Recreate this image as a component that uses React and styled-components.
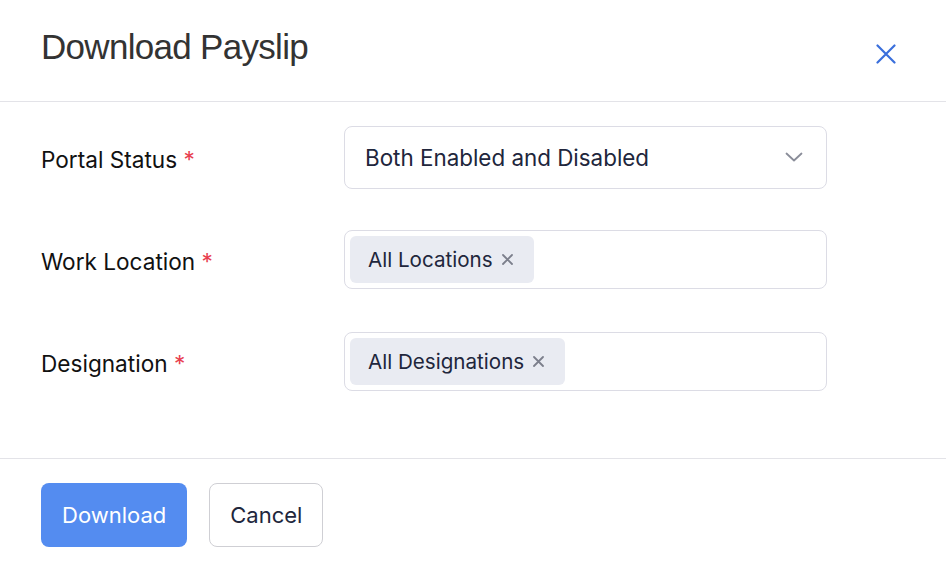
import styled, { createGlobalStyle } from 'styled-components';

const GlobalStyle = createGlobalStyle`
  html, body {
    margin: 0;
    padding: 0;
    background: #ffffff;
  }
  body {
    font-family: Inter, "Noto Sans", sans-serif;
    color: #21263c;
  }
  * {
    box-sizing: border-box;
  }
`;

const fields = [
  { label: 'Portal Status', type: 'select', value: 'Both Enabled and Disabled' },
  { label: 'Work Location', type: 'tags', value: 'All Locations' },
  { label: 'Designation', type: 'tags', value: 'All Designations' },
];

const App = () => {
  return (
    <>
      <GlobalStyle />
      <Modal>
        <Header>
          <Title>Download Payslip</Title>
          <CloseButton aria-label="Close">
            <svg width="20" height="20" viewBox="0 0 20 20" fill="none">
              <path d="M1.5 1.5L18.5 18.5M18.5 1.5L1.5 18.5" stroke="#3a6fdc" strokeWidth="2.2" strokeLinecap="round" />
            </svg>
          </CloseButton>
        </Header>

        <Body>
          {fields.map((field) => (
            <FieldRow key={field.label}>
              <Label>
                {field.label} <Required>*</Required>
              </Label>
              {field.type === 'select' ? (
                <SelectBox>
                  <SelectValue>{field.value}</SelectValue>
                  <svg width="18" height="10" viewBox="0 0 18 10" fill="none">
                    <path d="M1.5 1.5L9 8.5L16.5 1.5" stroke="#8a8d99" strokeWidth="1.8" strokeLinecap="round" strokeLinejoin="round" />
                  </svg>
                </SelectBox>
              ) : (
                <TagBox>
                  <Tag>
                    {field.value}
                    <TagRemove>
                      <svg width="11" height="11" viewBox="0 0 11 11" fill="none">
                        <path d="M1 1L10 10M10 1L1 10" stroke="#7c7f8c" strokeWidth="1.8" strokeLinecap="round" />
                      </svg>
                    </TagRemove>
                  </Tag>
                </TagBox>
              )}
            </FieldRow>
          ))}
        </Body>

        <Footer>
          <PrimaryButton>Download</PrimaryButton>
          <SecondaryButton>Cancel</SecondaryButton>
        </Footer>
      </Modal>
    </>
  );
};

export default App;

const Modal = styled.div`
  width: 946px;
  height: 566px;
  background: #fff;
  display: flex;
  flex-direction: column;
`;

const Header = styled.div`
  height: 102px;
  flex-shrink: 0;
  border-bottom: 1px solid #e3e3e8;
  display: flex;
  align-items: flex-start;
  justify-content: space-between;
  padding: 26px 50px 0 41px;
`;

const Title = styled.h2`
  margin: 0;
  font-family: "Liberation Sans", Arial, sans-serif;
  font-weight: 400;
  font-size: 35px;
  line-height: 42px;
  color: #333333;
  letter-spacing: -0.7px;
`;

const CloseButton = styled.button`
  border: none;
  background: none;
  padding: 0;
  margin-top: 18px;
  width: 20px;
  height: 20px;
  display: flex;
  cursor: pointer;
`;

const Body = styled.div`
  height: 357px;
  flex-shrink: 0;
  border-bottom: 1px solid #e3e3e8;
  padding: 25px 0 0 41px;
  display: flex;
  flex-direction: column;
  gap: 42px;
`;

const FieldRow = styled.div`
  display: flex;
  align-items: center;
  height: 60px;
`;

const Label = styled.div`
  width: 303px;
  padding-top: 5px;
  font-size: 22.6px;
  color: #111111;
`;

const Required = styled.span`
  color: #e8404f;
`;

const SelectBox = styled.div`
  width: 483px;
  height: 63px;
  border: 1px solid #dcdce5;
  border-radius: 8px;
  display: flex;
  align-items: center;
  justify-content: space-between;
  padding: 0 23px 0 20px;
`;

const SelectValue = styled.span`
  font-size: 22.4px;
  color: #21263c;
`;

const TagBox = styled.div`
  width: 483px;
  height: 59px;
  border: 1px solid #dcdce5;
  border-radius: 8px;
  display: flex;
  align-items: center;
  padding: 0 5px;
`;

const Tag = styled.div`
  height: 47px;
  background: #e9ebf2;
  border-radius: 6px;
  display: flex;
  align-items: center;
  gap: 9px;
  padding: 0 21px 0 18px;
  font-size: 20.6px;
  color: #21263c;
`;

const TagRemove = styled.span`
  display: flex;
  margin-top: 1px;
`;

const Footer = styled.div`
  flex: 1;
  display: flex;
  align-items: center;
  gap: 22px;
  padding: 5px 41px 0;
`;

const PrimaryButton = styled.button`
  height: 64px;
  padding: 0 21px;
  border: none;
  border-radius: 8px;
  background: #548cf0;
  color: #ffffff;
  font-family: Inter, sans-serif;
  font-size: 22px;
  cursor: pointer;
`;

const SecondaryButton = styled.button`
  height: 64px;
  padding: 0 20px;
  border: 1px solid #cfcfd4;
  border-radius: 8px;
  background: #ffffff;
  color: #21263c;
  font-family: Inter, sans-serif;
  font-size: 22px;
  cursor: pointer;
`;
